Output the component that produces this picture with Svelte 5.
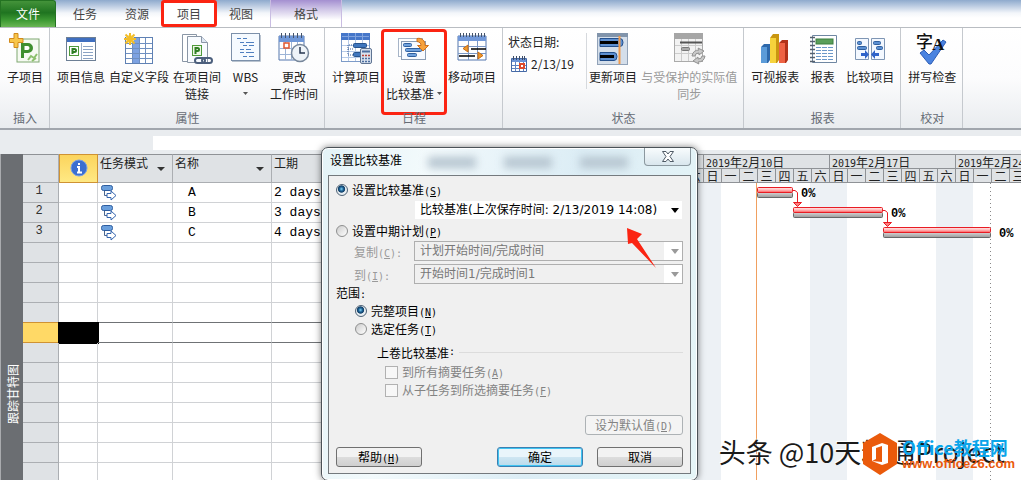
<script lang="ts">
	interface Tool {
		icon: string;
		lines: string[];
		arrow?: boolean;
		disabled?: boolean;
		marked?: boolean;
	}

	interface Group {
		title: string;
		tools: Tool[];
		status?: boolean;
	}

	const tabs = ['任务', '资源', '项目', '视图'];

	const groups: Group[] = [
		{ title: '插入', tools: [{ icon: 'subproject', lines: ['子项目'] }] },
		{
			title: '属性',
			tools: [
				{ icon: 'info', lines: ['项目信息'] },
				{ icon: 'fields', lines: ['自定义字段'] },
				{ icon: 'links', lines: ['在项目间', '链接'] },
				{ icon: 'wbs', lines: ['WBS', ''], arrow: true },
				{ icon: 'worktime', lines: ['更改', '工作时间'] }
			]
		},
		{
			title: '日程',
			tools: [
				{ icon: 'calculate', lines: ['计算项目'] },
				{ icon: 'baseline', lines: ['设置', '比较基准'], arrow: true, marked: true },
				{ icon: 'move', lines: ['移动项目'] }
			]
		},
		{
			title: '状态',
			status: true,
			tools: [
				{ icon: 'update', lines: ['更新项目'] },
				{ icon: 'sync', lines: ['与受保护的实际值', '同步'], disabled: true }
			]
		},
		{
			title: '报表',
			tools: [
				{ icon: 'visual', lines: ['可视报表'] },
				{ icon: 'report', lines: ['报表'] },
				{ icon: 'compare', lines: ['比较项目'] }
			]
		},
		{ title: '校对', tools: [{ icon: 'spelling', lines: ['拼写检查'] }] }
	];

	const tasks = [
		{ name: 'A', duration: '2 days', x: 72, width: 36 },
		{ name: 'B', duration: '3 days', x: 108, width: 90 },
		{ name: 'C', duration: '4 days', x: 198, width: 108 }
	];
	const rows = Array.from({ length: 16 }, (_, i) => tasks[i]);
	const selectedRow = 7;

	const weeks = ['2019年2月10日', '2019年2月17日', '2019年2月24日'];
	const days = ['日', '一', '二', '三', '四', '五', '六'];

	let target = $state('baseline');
	let scope = $state('all');

	// half-width runs are set apart from the Chinese text
	const runs = (text: string) => text.split(/([\x20-\x7e]+)/).filter(Boolean);
	const isAscii = (text: string) => /^[\x20-\x7e]/.test(text);
</script>

{#snippet mixed(text: string)}
	{#each runs(text) as run}<span class:mono={isAscii(run)}>{run}</span>{/each}
{/snippet}

{#snippet key(letter: string, tail = '')}
	<span class="mono">(<u>{letter}</u>){tail}</span>
{/snippet}

{#snippet caret()}
	<svg class="caret" width="5" height="3" aria-hidden="true"><path d="M0 0H5L2.500 3Z" fill="#555" /></svg>
{/snippet}

{#snippet icon(name: string)}
	<svg class="icon" viewBox="0 0 32 32" aria-hidden="true">
		{#if name === 'subproject'}
			<rect x="8" y="6" width="22" height="23" fill="#f6faf2" stroke="#7fa870" />
			<path d="M12 25V10h7a5 5 0 0 1 0 10h-4v5z" fill="#3f8f2f" />
			<path d="M15.500 13h3a2 2 0 0 1 0 4h-3z" fill="#fff" />
			<path d="M19 27l3-4 3 2 3-4M23 28l4-3" stroke="#8cc06d" stroke-width="2" fill="none" />
			<path d="M5 .5h4v5h5v4H9v5H5v-5H.5v-4H5z" fill="#f7c64a" stroke="#d18a1c" />
		{:else if name === 'info'}
			<rect x="1.500" y="4.500" width="29" height="23" fill="#fff" stroke="#6d7f95" />
			<rect x="2" y="5" width="28" height="4" fill="#3f6fc0" />
			<rect x="4.500" y="13.500" width="9" height="9" fill="#fff" stroke="#4f9a3c" />
			<path d="M7.500 21v-5h2a1.500 1.500 0 0 1 0 3h-2" stroke="#2f7f24" stroke-width="2" fill="none" />
			<path d="M16.500 10v17" stroke="#9db0c8" />
			<path d="M18 13.500h10M18 16.500h10M18 19.500h10M18 22.500h10M18 25.500h10" stroke="#8ba3c4" />
		{:else if name === 'fields'}
			<rect x="2.500" y="4.500" width="27" height="26" fill="#fff" stroke="#5f81b4" />
			<rect x="9" y="5" width="7" height="25" fill="#7da2e2" />
			<path d="M3 10.500h26M3 15.500h26M3 20.500h26M3 25.500h26M9.500 5v25M16.500 5v25M22.500 5v25" stroke="#6f8fc0" />
			<circle cx="7" cy="6" r="4" fill="#ffe88a" />
			<path d="M7 0v12M1 6h12M2.500 1.500l9 9M11.500 1.500l-9 9" stroke="#f2bd2a" stroke-width="2" />
		{:else if name === 'links'}
			<path d="M1.500 1.500h14v27h-14z" fill="#fff" stroke="#8a96a6" />
			<path d="M6.500 3.500h14l6 6v20h-20z" fill="#f8fbff" stroke="#8a96a6" />
			<path d="M20.500 3.500v6h6" fill="#dde6f2" stroke="#8a96a6" />
			<rect x="11.500" y="12.500" width="9" height="10" fill="#eef7e8" stroke="#4f9a3c" />
			<path d="M14.500 21v-6h2a1.500 1.500 0 0 1 0 3h-2" stroke="#2f7f24" stroke-width="2" fill="none" />
			<rect x="14" y="25" width="10" height="5" rx="2.500" fill="none" stroke="#4c5f7d" stroke-width="2" />
			<rect x="21" y="25" width="10" height="5" rx="2.500" fill="none" stroke="#4c5f7d" stroke-width="2" />
		{:else if name === 'wbs'}
			<rect x="1.500" y=".5" width="28" height="27" fill="#f5faff" stroke="#7c90aa" />
			<path d="M2 28.500h28.500V2" stroke="#b9c3cf" fill="none" />
			<path d="M7 5.500h4M13 5.500h4M10 9.500h4M16 9.500h8M13 12.500h4M19 12.500h5M10 16.500h4M16 16.500h5M10 19.500h4M16 19.500h8M13 23.500h4M19 23.500h5" stroke="#4e7fc0" />
		{:else if name === 'worktime'}
			<path d="M1 3h25v24H1z" fill="#fff" stroke="#5577ad" />
			<path d="M1 3h25v6H1z" fill="#6f97d8" />
			<path d="M1 15.500h25M1 21.500h25M7.500 9v18M13.500 9v18M19.500 9v18" stroke="#9db4d6" />
			<path d="M3.500 0v5M7.500 0v5M11.500 0v5M15.500 0v5M19.500 0v5M23.500 0v5" stroke="#44536b" />
			<rect x="6" y="10" width="5" height="5" fill="#fff" stroke="#e0562e" stroke-width="1.500" />
			<circle cx="22" cy="20" r="8.500" fill="#eef3f8" stroke="#77879b" stroke-width="1.500" />
			<path d="M22 14v6h5" stroke="#26364f" stroke-width="1.500" fill="none" />
		{:else if name === 'calculate'}
			<rect x="1.500" y=".5" width="28" height="28" fill="#fff" stroke="#7d9bc8" />
			<path d="M2 12.500h27M2 18.500h27M2 24.500h27M8.500 7v21M15.500 7v21M22.500 7v21" stroke="#b7cbe8" />
			<rect x="1" y="0" width="29" height="7" fill="#4576c9" />
			<path d="M2 3.500h27M8.500 0v7M15.500 0v7M22.500 0v7" stroke="#7fa2de" />
			<rect x="13.500" y="10.500" width="13" height="4" rx="1" fill="#3f76bd" stroke="#27548e" />
			<rect x="13.500" y="19.500" width="8" height="4" rx="1" fill="#3f76bd" stroke="#27548e" />
			<path d="M12 12H8v10h5M8 16h6" stroke="#3c5f95" stroke-dasharray="1 1" fill="none" />
			<rect x="20.500" y="15.500" width="11" height="15" rx="1.500" fill="#d9e2ee" stroke="#5f7493" />
			<path d="M22 18.500h8" stroke="#4c6ea0" stroke-width="2" />
			<path d="M22 22.500h8" stroke="#b8433a" stroke-width="1.500" stroke-dasharray="2 1" />
			<path d="M22 25.500h8M22 28.500h8" stroke="#4c6ea0" stroke-width="1.500" stroke-dasharray="2 1" />
		{:else if name === 'baseline'}
			<rect x=".5" y="5.500" width="24" height="18" fill="#fff" stroke="#a6b4c7" />
			<rect x="3.500" y="8.500" width="24" height="18" fill="#f7faff" stroke="#8b9db5" />
			<rect x="5.500" y="10.500" width="8" height="3" rx="1" fill="#6fa1dd" stroke="#2f5f9e" />
			<rect x="7.500" y="15.500" width="16" height="3" rx="1" fill="#6fa1dd" stroke="#2f5f9e" />
			<rect x="9.500" y="20.500" width="9" height="3" rx="1" fill="#6fa1dd" stroke="#2f5f9e" />
			<path d="M19 5.500c5-1 8 2 8 7h3.500l-5.500 5.500-5.500-5.500h3.500c0-2-1-3.500-4-4z" fill="#f7a23c" stroke="#d0701a" />
		{:else if name === 'move'}
			<path d="M2 3h28v24H2z" fill="#fff" stroke="#5577ad" />
			<path d="M2 3h28v5H2z" fill="#7299da" />
			<path d="M4.500 0v4M7.500 0v4M10.500 0v4M13.500 0v4M16.500 0v4M19.500 0v4M22.500 0v4M25.500 0v4M28.500 0v4" stroke="#44536b" />
			<path d="M12.500 8v19M21.500 8v19M2 13.500h28M2 20.500h28" stroke="#7b98c6" />
			<path d="M15 16h15M3 23h16" stroke="#000" stroke-width="1.500" />
			<path d="M12 12v7l-5-3.500zM22 19v7l5-3.500z" fill="#f19a2b" stroke="#c66b12" />
		{:else if name === 'update'}
			<rect x=".5" y=".5" width="30" height="31" fill="#d4deea" stroke="#91a2b8" />
			<path d="M0 0h31v4H0z" fill="#8194ab" />
			<path d="M3 5.500h20q3 0 3 4t-3 4H3zM3 19.500h14q3 0 3 4t-3 4H3z" fill="#5d8fd0" stroke="#24508d" />
			<path d="M3 9.500h18M3 23.500h14" stroke="#000" stroke-width="3" />
			<path d="M22.500 3v28" stroke="#f09a4c" stroke-width="2" />
		{:else if name === 'sync'}
			<rect x="1.500" y=".5" width="28" height="28" fill="#f2f2f2" stroke="#aaa" />
			<path d="M1 0h29v6H1z" fill="#a6a6a6" />
			<path d="M8.500 6v22M15.500 6v22M22.500 6v22M2 12.500h27M2 20.500h27" stroke="#ccc" />
			<path d="M7 9.500h22" stroke="#555" stroke-width="2" />
			<rect x="8.500" y="14.500" width="8" height="3" rx="1" fill="#aaa" stroke="#777" />
			<path d="M19 23q1-6 7-6l-1-2 6 3-5 4v-2q-4 0-4 3zM32 23q-1 6-7 6l1 2-6-3 5-4v2q4 0 4-3z" fill="#c8c8c8" stroke="#929292" />
		{:else if name === 'visual'}
			<path d="M2 14l3-3h6v16l-2 3H2z" fill="#2d68ab" />
			<path d="M2 14h6v16H2z" fill="#5b9bd8" />
			<path d="M11 5l3-4h6v26l-2 3h-7z" fill="#c99610" />
			<path d="M11 5h6v25h-6z" fill="#f6d33c" />
			<path d="M20 10l3-3h6v20l-2 3h-7z" fill="#b23219" />
			<path d="M20 10h6v20h-6z" fill="#ee6243" />
		{:else if name === 'report'}
			<path d="M5.500 2.500h24v27h-24z" fill="#fff" stroke="#6f87a2" />
			<rect x="9" y="6" width="17" height="5" fill="#5b9f5a" stroke="#3d7f40" />
			<path d="M9 14.500h17M9 17.500h17M9 20.500h17M9 23.500h17M9 26.500h17" stroke="#6c98c9" stroke-dasharray="5 1" />
			<path d="M3 4.500h5M3 8.500h5M3 12.500h5M3 16.500h5M3 20.500h5M3 24.500h5M3 28.500h5" stroke="#56606d" stroke-width="1.500" />
		{:else if name === 'compare'}
			<path d="M1.500 5.500h13v21h-13zM17.500 5.500h13v21h-13z" fill="#f3f8ff" stroke="#7f96b4" />
			<rect x="3.500" y="8.500" width="4" height="3" rx="1" fill="#5b8fd2" stroke="#2f5f9e" />
			<rect x="3.500" y="13.500" width="9" height="3" rx="1" fill="#5b8fd2" stroke="#2f5f9e" />
			<rect x="19.500" y="8.500" width="7" height="3" rx="1" fill="#5b8fd2" stroke="#2f5f9e" />
			<rect x="22.500" y="13.500" width="6" height="3" rx="1" fill="#5b8fd2" stroke="#2f5f9e" />
			<path d="M7 20h4v-3l4 4.500-4 4.500v-3H7zM25 20h-4v-3l-4 4.500 4 4.500v-3h4z" fill="#2f63c9" />
		{:else if name === 'spelling'}
			<path d="M4 20l4-3 5 5L27 7l3 2-15 22h-2z" fill="#4a83e0" stroke="#2d5db5" />
			<text x="0" y="15" font-size="17" font-weight="500" fill="#111">字</text>
			<text class="serif" x="16" y="17" font-size="17" font-weight="700" fill="#111">A</text>
		{/if}
	</svg>
{/snippet}

<div class="app">
	<nav class="tabs">
		<button class="file">文件</button>
		{#each tabs as tab}
			<button class="tab" class:active={tab === '项目'}>{tab}</button>
		{/each}
		<button class="tab format">格式</button>
	</nav>

	<div class="ribbon">
		{#each groups as group}
			<section class="group">
				<div class="tools">
					{#if group.status}
						<div class="status-date">
							<span>状态日期:</span>
							<button>
								<svg width="16" height="16" aria-hidden="true">
									<path d="M.5 2.500h15v13H.5z" fill="#fff" stroke="#4569a6" />
									<path d="M1 3h14v3H1z" fill="#6b93d6" />
									<path d="M2.500 0v4M5.500 0v4M8.500 0v4M11.500 0v4M13.500 0v4" stroke="#3d4c66" />
									<path d="M1 9.500h14M1 12.500h14M4.500 6v9M8.500 6v9M12.500 6v9" stroke="#5d83c2" />
									<path d="M9 8h4v4H9z" fill="#fff" stroke="#dd4a2a" stroke-width="2" />
								</svg>
								2/13/19
							</button>
						</div>
					{/if}
					{#each group.tools as tool}
						<button
							class={['tool', tool.icon]}
							class:marked={tool.marked}
							disabled={tool.disabled}
						>
							{@render icon(tool.icon)}
							{#each tool.lines as line, i}
								<span class="line">
									{line}
									{#if tool.arrow && i === tool.lines.length - 1}{@render caret()}{/if}
								</span>
							{/each}
						</button>
					{/each}
				</div>
				<h2>{group.title}</h2>
			</section>
		{/each}
	</div>

	<div class="entry-bar"><input aria-label="编辑" /></div>

	<main>
		<aside><span>跟踪甘特图</span></aside>

		<table>
			<colgroup>
				<col class="c-id" /><col class="c-info" /><col class="c-mode" /><col class="c-name" /><col />
			</colgroup>
			<thead>
				<tr>
					<th></th>
					<th class="info">
						<svg width="18" height="18" aria-label="标记">
							<circle cx="9" cy="9" r="8" fill="#3b6fd0" stroke="#7aa0e4" />
							<path d="M9 4v2M7 8h2v5M7 13.500h5" stroke="#fff" stroke-width="2" fill="none" />
						</svg>
					</th>
					<th><div class="head">任务模式<svg width="8" height="4"><path d="M0 0h8L4 4z" fill="#333" /></svg></div></th>
					<th><div class="head">名称<svg width="8" height="4"><path d="M0 0h8L4 4z" fill="#333" /></svg></div></th>
					<th><div class="head">工期</div></th>
				</tr>
			</thead>
			<tbody>
				{#each rows as task, i}
					<tr class:selected={i === selectedRow} class:above={i === selectedRow - 1}>
						<th scope="row">{task ? i + 1 : ''}</th>
						<td class="mark"></td>
						<td class="mode">
							{#if task}
								<svg width="18" height="16" aria-hidden="true">
									<rect x="1.500" y=".5" width="11" height="5" rx="2" fill="#6a9fdc" stroke="#2c5c9f" />
									<path d="M4.500 6v4.500H7" stroke="#49658f" fill="none" />
									<path d="M7 8.500h4V6l5 4.500-5 4.500v-2.500H7z" fill="#fff" stroke="#3464ad" />
								</svg>
							{/if}
						</td>
						<td class="name">{task?.name ?? ''}</td>
						<td>{task?.duration ?? ''}</td>
					</tr>
				{/each}
			</tbody>
		</table>

		<div class="chart">
			<div class="timescale">
				<div class="week partial">
					<div class="week-title"></div>
					<div class="days"><span>六</span></div>
				</div>
				{#each weeks as week}
					<div class="week">
						<div class="week-title">{@render mixed(week)}</div>
						<div class="days">
							{#each days as day}<span>{day}</span>{/each}
						</div>
					</div>
				{/each}
			</div>
			<svg class="bars" width="100%" height="100%" role="img" aria-label="甘特图">
				<defs>
					<linearGradient id="red" x2="0" y2="1">
						<stop offset="0" stop-color="#ffe9e9" />
						<stop offset="0.5" stop-color="#ffb9b9" />
						<stop offset="1" stop-color="#f55" />
					</linearGradient>
					<linearGradient id="grey" x2="0" y2="1">
						<stop offset="0" stop-color="#d5d5d5" />
						<stop offset="1" stop-color="#999" />
					</linearGradient>
				</defs>
				<line x1="71.500" y1="0" x2="71.500" y2="100%" stroke="#f0a060" />
				<line x1="305.500" y1="0" x2="305.500" y2="100%" stroke="#888" stroke-dasharray="1 3" />
				{#each tasks as task, i}
					<g transform="translate({task.x} {i * 20})">
						<rect x=".5" y="9.500" width={task.width - 1} height="5" rx="1" fill="url(#grey)" stroke="#686868" />
						<rect x=".5" y="4.500" width={task.width - 1} height="5" rx="1" fill="url(#red)" stroke="#e81c24" />
						{#if i < tasks.length - 1}
							<path d="M{task.width} 7.500h2l2.500 2V20" stroke="#e81c24" fill="none" />
							<path d="M{task.width + 0.5} 19.500h8l-4 4z" fill="#ff7b7b" stroke="#e81c24" />
						{/if}
						<text x={task.width + 8} y="14">0%</text>
					</g>
				{/each}
			</svg>
		</div>
	</main>

	<div class="dialog" role="dialog" aria-labelledby="dialog-title">
		<header>
			<h1 id="dialog-title">设置比较基准</h1>
			<div class="glass" aria-hidden="true"><i></i><i></i><i></i></div>
			<button class="close" aria-label="关闭">
				<svg width="12" height="11"><path d="M.5 .5h3.500L6 3l2-2.500h3.500L8 5.500l3.500 5H8L6 8l-2 2.500H.5l3.500-5z" fill="#fff" stroke="#4f5b66" /></svg>
			</button>
		</header>

		<form class="panel" onsubmit={(e) => e.preventDefault()}>
			<label class="choice">
				<input type="radio" value="baseline" bind:group={target} />
				<span>设置比较基准{@render key('S')}</span>
			</label>
			<div class="field">
				<span></span>
				<div class="select">
					<select aria-label="比较基准"><option>比较基准(上次保存时间: 2/13/2019 14:08)</option></select>
					<svg width="8" height="5"><path d="M0 0h8L4 5z" /></svg>
				</div>
			</div>
			<label class="choice interim">
				<input type="radio" value="interim" bind:group={target} />
				<span>设置中期计划{@render key('P')}</span>
			</label>
			<div class="field">
				<label for="copy">复制{@render key('C', ':')}</label>
				<div class="select">
					<select id="copy" disabled={target === 'baseline'}><option>计划开始时间/完成时间</option></select>
					<svg width="8" height="5"><path d="M0 0h8L4 5z" /></svg>
				</div>
			</div>
			<div class="field into">
				<label for="into">到{@render key('I', ':')}</label>
				<div class="select">
					<select id="into" disabled={target === 'baseline'}><option>开始时间1/完成时间1</option></select>
					<svg width="8" height="5"><path d="M0 0h8L4 5z" /></svg>
				</div>
			</div>

			<p>{@render mixed('范围:')}</p>
			<div class="scope">
				<label class="choice">
					<input type="radio" value="all" bind:group={scope} />
					<span>完整项目{@render key('N')}</span>
				</label>
				<label class="choice">
					<input type="radio" value="selected" bind:group={scope} />
					<span>选定任务{@render key('T')}</span>
				</label>
			</div>

			<div class="rollup">
				<div class="rule">{@render mixed('上卷比较基准:')}</div>
				<label class="choice">
					<input type="checkbox" disabled={scope === 'all'} />
					<span>到所有摘要任务{@render key('A')}</span>
				</label>
				<label class="choice">
					<input type="checkbox" disabled={scope === 'all'} />
					<span>从子任务到所选摘要任务{@render key('F')}</span>
				</label>
			</div>

			<div class="default"><button type="button" disabled>设为默认值{@render key('D')}</button></div>
			<div class="actions">
				<button type="button">帮助{@render key('H')}</button>
				<button class="ok">确定</button>
				<button type="button">取消</button>
			</div>
		</form>

		<svg class="pointer" width="30" height="42" aria-hidden="true">
			<path d="M0 0l15 6-5 5 19 29L5 15l-4 1z" fill="#fb2412" />
		</svg>
	</div>

	<div class="watermark">头条 @10天精通Project</div>
	<a class="brand" href="http://www.office26.com">
		<svg width="36" height="42" viewBox="0 0 36 42" aria-hidden="true">
			<path d="M18 0l17 10v21L18 42 1 31V10z" fill="#ea5a0b" />
			<path d="M10 14l10-4 6 2v18l-6 2-10-4 10 1V13l-6 2v11l-4 2z" fill="#fff" />
		</svg>
		<span>
			<strong>Office教程网</strong>
			<small>www.office26.com</small>
		</span>
	</a>
</div>

<style>
	:global(body) {
		background: #fff;
	}

	.app {
		position: relative;
		display: flex;
		flex-direction: column;
		height: 100vh;
		overflow: hidden;
		background: #fff;
		color: #222;
		font: 12px/17px 'Noto Sans CJK SC', sans-serif;
	}

	button,
	input,
	select {
		margin: 0;
		padding: 0;
		border: 0;
		background: none;
		color: inherit;
		font: inherit;
	}

	h1,
	h2,
	p {
		margin: 0;
		font-size: 12px;
		font-weight: 400;
	}

	.mono {
		font-family: 'DejaVu Sans Mono', monospace;
		font-size: 10px;
		line-height: 12px;
	}

	/* ribbon tabs */
	.tabs {
		display: flex;
		flex: none;
		height: 27px;
		border-bottom: 1px solid #b9bdc2;
		background: linear-gradient(#8faacd, #bccce2 6px, #f3f6fa 13px, #fff 18px);
	}

	.tabs button {
		padding-bottom: 1px;
	}

	.file {
		width: 56px;
		margin-right: 3px;
		background: linear-gradient(#44933a, #1f7420 45%, #3f9b34 75%, #6ab654);
		border: 1px solid #247322;
		border-bottom: 0;
		border-radius: 0 3px 0 0;
		color: #fff;
	}

	.tab {
		width: 52px;
		color: #444;
	}

	.tab.active {
		width: 56px;
		margin: 0 -2px;
		border: 3px solid #fb2412;
		border-radius: 3px;
		background: #fff;
	}

	.tab.format {
		width: 72px;
		margin-left: 3px;
		border: solid #c9bde2;
		border-width: 0 1px;
		background: linear-gradient(#a48fd0, #cabfe4 8px, #fff 20px);
	}

	/* ribbon */
	.ribbon {
		display: flex;
		flex: none;
		height: 100px;
		border-bottom: 2px solid #a1a6ad;
		background: linear-gradient(#fff, #fcfcfd 50%, #e9ecef);
	}

	.group {
		display: flex;
		flex-direction: column;
		justify-content: space-between;
		box-sizing: border-box;
		padding: 5px 4px 2px 5px;
		border-right: 1px solid #c5c9ce;
	}

	.group h2 {
		color: #666c75;
		text-align: center;
	}

	.tools {
		display: flex;
		height: 76px;
	}

	.tool {
		display: flex;
		flex-direction: column;
		align-items: center;
		min-width: 40px;
		padding: 0 2px;
		white-space: nowrap;
	}

	.tool.wbs {
		min-width: 45px;
	}

	.tool.report {
		min-width: 43px;
	}

	.tool.marked {
		min-width: 64px;
		height: 84px;
		margin-top: -3px;
		padding-top: 3px;
		outline: 3px solid #fb2412;
		outline-offset: -2px;
		border-radius: 3px;
	}

	.tool:disabled {
		color: #999;
	}

	.icon {
		width: 32px;
		height: 32px;
		margin-bottom: 3px;
		overflow: visible;
	}

	.icon .serif {
		font-family: 'Liberation Serif', serif;
	}

	.line {
		display: flex;
		align-items: center;
		gap: 3px;
		height: 17px;
	}

	.status-date {
		display: flex;
		flex-direction: column;
		gap: 5px;
		width: 78px;
		height: 56px;
		border-right: 1px solid #d6d9dd;
	}

	.status-date button {
		display: flex;
		align-items: center;
		gap: 4px;
		padding-left: 3px;
	}

	.entry-bar {
		flex: none;
		padding: 6px 0 4px 153px;
		background: #e9ecef;
	}

	.entry-bar input {
		display: block;
		width: 100%;
		height: 14px;
		background: #fff;
	}

	main {
		display: flex;
		flex: 1;
		min-height: 0;
		overflow: hidden;
		align-items: flex-start;
	}

	aside {
		display: flex;
		flex: none;
		align-items: flex-end;
		justify-content: center;
		align-self: stretch;
		box-sizing: border-box;
		width: 23px;
		padding-bottom: 56px;
		border-left: 1px solid #a9abae;
		background: #6b6e72;
		color: #fff;
	}

	aside span {
		writing-mode: sideways-lr;
	}

	/* task sheet */
	table {
		flex: none;
		width: 662px;
		border-collapse: separate;
		border-spacing: 0;
		table-layout: fixed;
	}

	.c-id {
		width: 36px;
	}

	.c-info {
		width: 39px;
	}

	.c-mode {
		width: 75px;
	}

	.c-name {
		width: 99px;
	}

	th,
	td {
		box-sizing: border-box;
		height: 20px;
		padding: 0 0 0 2px;
		border: solid #d0d2d5;
		border-width: 0 1px 1px 0;
		font-weight: 400;
		line-height: 16px;
		text-align: left;
		white-space: nowrap;
	}

	thead th {
		height: 29px;
		padding: 0 0 0 2px;
		border-color: #abaeb2;
		border-top: 1px solid #8f9296;
		background: #dfe2e5;
		vertical-align: top;
	}

	.head {
		display: flex;
		align-items: center;
		justify-content: space-between;
		padding-right: 7px;
	}

	.head svg {
		margin-top: 12px;
	}

	thead th.info {
		padding: 4px 0 0;
		border: 1px solid #cf9233;
		background: linear-gradient(#fbd45d, #ffe984);
		text-align: center;
	}

	td {
		color: #000;
		font: 13px/16px 'Liberation Mono', monospace;
	}

	tbody th {
		padding: 0 3px 0 0;
		background: #dfe2e5;
		border-color: #abaeb2;
		color: #333;
		font-family: 'Liberation Mono', monospace;
		line-height: 16px;
		text-align: center;
		vertical-align: top;
	}

	.mode svg {
		display: block;
	}

	.name {
		padding-left: 15px;
	}

	.above td,
	.selected td {
		border-bottom-color: #6f7275;
	}

	.above th,
	.selected th {
		border-bottom-color: #cf9233;
	}

	.selected th {
		background: #ffd966;
	}

	.selected .mark {
		border-color: #000;
		background: #000;
		box-shadow: 0 0 0 1px #000;
	}

	/* Gantt chart */
	.chart {
		display: flex;
		flex: 1;
		flex-direction: column;
		align-self: stretch;
		min-width: 0;
		overflow: hidden;
		background: repeating-linear-gradient(90deg, #edf1f5 0 36px, #fff 36px 125px, #edf1f5 125px 126px);
	}

	.timescale {
		display: flex;
		flex: none;
		height: 29px;
		box-sizing: border-box;
		border-top: 1px solid #8f9296;
		background: #dfe2e5;
	}

	.week {
		flex: none;
		width: 126px;
	}

	.week.partial {
		width: 18px;
	}

	.week-title {
		box-sizing: border-box;
		height: 14px;
		padding-left: 2px;
		border: solid #8f9296;
		border-width: 0 0 1px 1px;
		line-height: 13px;
		white-space: nowrap;
	}

	.days {
		display: flex;
	}

	.days span {
		box-sizing: border-box;
		width: 18px;
		height: 14px;
		border: solid #8f9296;
		border-width: 0 0 1px 1px;
		line-height: 13px;
		text-align: center;
	}

	.bars {
		flex: 1;
		min-height: 0;
		overflow: hidden;
	}

	.bars text {
		fill: #000;
		font: 700 12px 'Liberation Mono', monospace;
	}

	/* dialog */
	.dialog {
		position: absolute;
		top: 147px;
		left: 321px;
		box-sizing: border-box;
		width: 377px;
		padding: 0 6px 6px;
		border: 1px solid #4b5257;
		border-radius: 7px;
		background: linear-gradient(100deg, #e4f3f7, #f3fafc 25%, #dcedf5 60%, #e6f5f7);
		box-shadow: 0 0 7px rgb(0 0 0 / 50%), inset 0 0 0 1px #fff;
		color: #000;
	}

	.dialog header {
		display: flex;
		align-items: flex-start;
		height: 27px;
	}

	.dialog h1 {
		padding: 3px 0 0 2px;
	}

	.glass {
		display: flex;
		flex: 1;
		gap: 28px;
		padding: 9px 0 0 26px;
		filter: blur(4px);
	}

	.glass i {
		width: 48px;
		height: 11px;
		background: #b5c4cf;
	}

	.close {
		display: flex;
		align-items: center;
		justify-content: center;
		width: 47px;
		height: 18px;
		border: 1px solid #8b989f;
		border-top: 0;
		border-radius: 0 0 4px 4px;
		background: linear-gradient(#f8fcfd, #d9e6ed);
	}

	.panel {
		padding: 4px 7px 6px;
		border: 1px solid #74797d;
		background: #f0f0f0;
	}

	.choice {
		display: flex;
		align-items: center;
		gap: 4px;
		height: 20px;
	}

	.choice > span {
		padding-bottom: 2px;
	}

	.choice.interim {
		margin-top: 1px;
	}

	.choice input {
		appearance: none;
		flex: none;
		box-sizing: border-box;
		width: 12px;
		height: 12px;
		border: 1px solid #8e8f8f;
		background: linear-gradient(135deg, #ccc, #fff);
	}

	.choice input[type='radio'] {
		border-radius: 50%;
	}

	.choice input[type='radio']:checked {
		border-color: #4f6275;
		background: radial-gradient(circle at 45% 40%, #7fd4f5, #1c5f93 25%, #123f66 40%, #e8eef2 50%);
	}

	.choice input[type='checkbox'] {
		width: 13px;
		height: 13px;
		border-color: #b1b1b1;
		background: #f7f7f7;
	}

	.choice:has(:disabled) {
		color: #838383;
	}

	.field {
		display: grid;
		grid-template-columns: 60px 1fr;
		align-items: center;
		height: 20px;
		padding-left: 18px;
	}

	.field.into {
		margin-top: 3px;
	}

	.field:has(:disabled) {
		color: #9a9a9a;
	}

	.select {
		position: relative;
	}

	.select select {
		appearance: none;
		display: block;
		box-sizing: border-box;
		width: 100%;
		height: 20px;
		padding: 0 20px 0 5px;
		border: 1px solid #f0f0f0;
		background: #fff;
		font-family: 'DejaVu Sans', 'Noto Sans CJK SC', sans-serif;
		opacity: 1;
	}

	.select select:disabled {
		border-color: #afafaf;
		background: linear-gradient(270deg, #fff 18px, #f0f0f0 18px);
		color: #777;
	}

	.select svg {
		position: absolute;
		top: 8px;
		right: 4px;
		fill: currentcolor;
		pointer-events: none;
	}

	.panel p {
		height: 18px;
	}

	.scope {
		padding-left: 19px;
	}

	.scope .choice,
	.rollup .choice {
		height: 18px;
	}

	.rollup {
		padding: 5px 0 0 41px;
	}

	.rollup .choice {
		padding-left: 8px;
	}

	.rule {
		display: flex;
		align-items: center;
		height: 18px;
		margin-bottom: 2px;
	}

	.rule::after {
		flex: 1;
		height: 1px;
		margin-left: 4px;
		background: #dcdcdc;
		content: '';
	}

	.default {
		display: flex;
		justify-content: flex-end;
		margin: 16px 0 12px;
	}

	.actions {
		display: flex;
		gap: 14px;
	}

	.default button,
	.actions button {
		box-sizing: border-box;
		width: 86px;
		height: 20px;
		border: 1px solid #707070;
		border-radius: 3px;
		background: linear-gradient(#f2f2f2 50%, #ddd 50%, #cfcfcf);
		line-height: 16px;
	}

	.default button {
		width: 98px;
		border-color: #adb2b5;
		background: #f4f4f4;
		color: #838383;
	}

	.actions button:first-child {
		margin-right: auto;
	}

	.actions .ok {
		border-color: #3c7fb1;
		background: linear-gradient(#e9f5fb 50%, #cfe6f2 50%, #b9dbec);
		box-shadow: inset 0 0 0 1px #3fc4f2;
	}

	.pointer {
		position: absolute;
		top: 80px;
		right: 40px;
	}

	.watermark {
		position: absolute;
		right: 16px;
		bottom: 10px;
		color: #1a1a1a;
		font-size: 27px;
		font-weight: 400;
		line-height: 36px;
		text-shadow: -1px -1px 0 #fff;
		white-space: nowrap;
	}

	.brand {
		position: absolute;
		right: 6px;
		bottom: 5px;
		display: flex;
		align-items: center;
		gap: 4px;
		text-decoration: none;
	}

	.brand span {
		display: flex;
		flex-direction: column;
	}

	.brand strong {
		color: #0ba5ea;
		font-size: 18px;
		line-height: 20px;
	}

	.brand small {
		color: #ea5a0b;
		font: 700 13px/14px 'Liberation Sans', sans-serif;
	}
</style>
